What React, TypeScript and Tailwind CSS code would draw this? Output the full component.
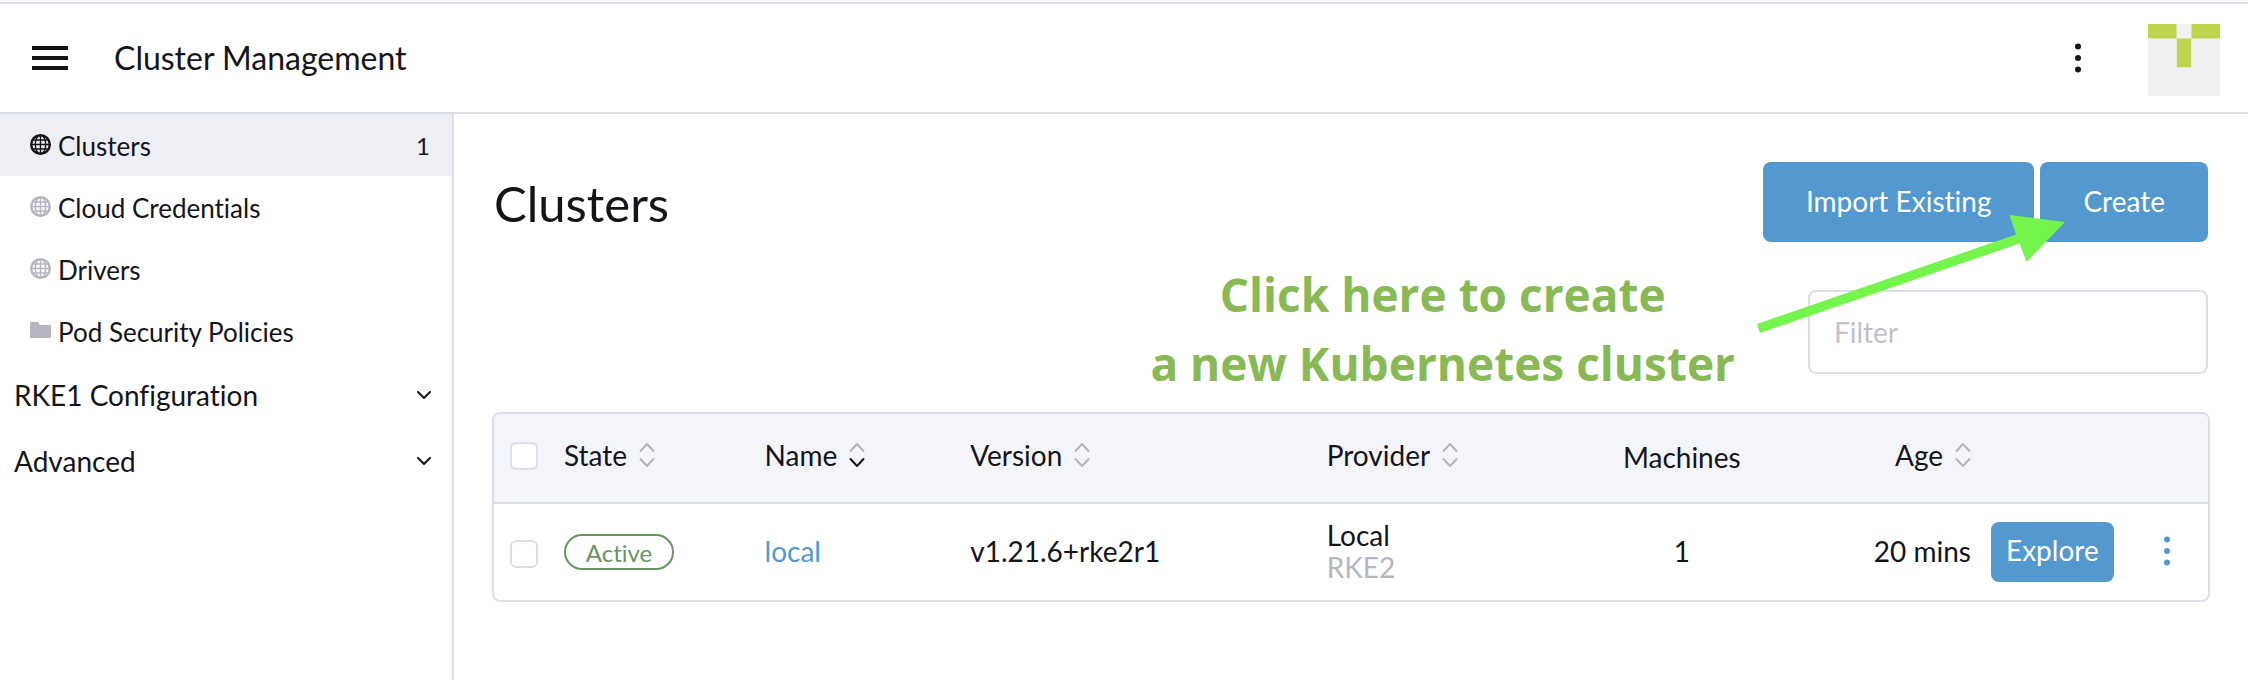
import { ReactNode } from "react";

function GlobeIcon() {
  return (
    <svg viewBox="0 0 21 21" className="h-[21px] w-[21px]" fill="none" stroke="currentColor" aria-hidden="true">
      <circle cx="10.5" cy="10.5" r="9.3" strokeWidth="2.4" />
      <ellipse cx="10.5" cy="10.5" rx="5.2" ry="9.4" strokeWidth="1.4" />
      <path d="M10.5 1v19M1.5 10.5h18M3 6h15M3 15h15" strokeWidth="1.4" />
    </svg>
  );
}

function FolderIcon() {
  return (
    <svg viewBox="0 0 21 21" className="h-[21px] w-[21px]" fill="currentColor" aria-hidden="true">
      <path d="M1 2h6.6a1 1 0 0 1 .9.6L9.600 5H20a1 1 0 0 1 1 1v11a1 1 0 0 1-1 1H1a1 1 0 0 1-1-1V3a1 1 0 0 1 1-1z" />
    </svg>
  );
}

function Chevron() {
  return (
    <svg viewBox="0 0 14 8" className="h-2 w-3.5" fill="none" stroke="currentColor" strokeWidth="2" strokeLinecap="round" strokeLinejoin="round" aria-hidden="true">
      <path d="M1 1l6 6 6-6" />
    </svg>
  );
}

function SortIcon({ active = false }: { active?: boolean }) {
  return (
    <svg viewBox="0 0 16 26" className="h-[26px] w-4" fill="none" strokeWidth="2" strokeLinecap="round" strokeLinejoin="round" aria-hidden="true">
      <path d="M1.500 9L8 2l6.500 7" stroke="#b4b5ba" />
      <path d="M1.500 17L8 24l6.500-7" stroke={active ? "#141419" : "#b4b5ba"} />
    </svg>
  );
}

function DotsIcon() {
  return (
    <svg viewBox="0 0 6 30" className="h-[30px] w-1.5" fill="currentColor" aria-hidden="true">
      <circle cx="3" cy="3.500" r="3" />
      <circle cx="3" cy="15" r="3" />
      <circle cx="3" cy="26.500" r="3" />
    </svg>
  );
}

function Avatar() {
  return (
    <svg viewBox="0 0 72 72" className="h-[72px] w-[72px]" role="img" aria-label="User avatar">
      <path fill="#f0f0f0" d="M0 0h72v72H0z" />
      <path fill="#bdd54c" d="M0 0h28.500v14.400H0zM43.500 0H72v14.400H43.500zM28.800 14.400h14.400v28.800H28.800z" />
    </svg>
  );
}

const navItems = [
  { label: "Clusters", count: 1, active: true },
  { label: "Cloud Credentials" },
  { label: "Drivers" },
  { label: "Pod Security Policies", folder: true },
];

const groups = ["RKE1 Configuration", "Advanced"];

function Checkbox({ label }: { label: string }) {
  return (
    <input
      type="checkbox"
      aria-label={label}
      className="block h-7 w-7 appearance-none rounded-md border-2 border-[#dcdee7] bg-white"
    />
  );
}

function SortHeader({ children, active, right }: { children: ReactNode; active?: boolean; right?: boolean }) {
  return (
    <th className="px-2.5 pb-1.5 font-normal">
      <button className={right ? "ml-auto flex items-center gap-3" : "flex items-center gap-3"}>
        {children}
        <SortIcon active={active} />
      </button>
    </th>
  );
}

export default function App() {
  return (
    <div className="flex min-h-screen flex-col bg-white pt-0.5 font-['Lato',sans-serif] text-[28px] leading-8 text-[#141419] [font-variant-ligatures:none]">
      <header className="flex h-28 shrink-0 items-center border-y-2 border-[#dcdee7] pr-7 pl-8">
        <button aria-label="Menu" className="flex w-9 flex-col gap-1.5">
          <span className="h-1 bg-current" />
          <span className="h-1 bg-current" />
          <span className="h-1 bg-current" />
        </button>
        <span className="ml-[46px] text-[32px] leading-10">Cluster Management</span>
        <button aria-label="More actions" className="ml-auto">
          <DotsIcon />
        </button>
        <div className="ml-[67px] pt-1">
          <Avatar />
        </div>
      </header>

      <div className="flex flex-1">
        <nav className="w-[454px] shrink-0 border-r-2 border-[#dcdee7]">
          <ul>
            {navItems.map((item) => (
              <li key={item.label}>
                <a
                  href="#"
                  className={
                    item.active
                      ? "flex h-[62px] items-center bg-[#eeeff4] pt-0.5 pr-[22px] pl-[30px] text-[26px]"
                      : "flex h-[62px] items-center pt-0.5 pr-[22px] pl-[30px] text-[26px]"
                  }
                >
                  <span className={item.active ? "mr-[7px] pb-1" : "mr-[7px] pb-1 text-[#b6b6c2]"}>
                    {item.folder ? <FolderIcon /> : <GlobeIcon />}
                  </span>
                  {item.label}
                  {item.count && <span className="ml-auto text-2xl">{item.count}</span>}
                </a>
              </li>
            ))}
          </ul>
          {groups.map((group) => (
            <button key={group} className="flex h-[66px] w-full items-center justify-between pr-[21px] pl-3.5">
              {group}
              <Chevron />
            </button>
          ))}
        </nav>

        <main className="relative min-w-0 flex-1 px-[38px] pt-12">
          <div className="flex items-center justify-between px-0.5">
            <h1 className="pt-0.5 text-[49px] leading-[56px]">Clusters</h1>
            <div className="flex gap-1.5">
              <button className="h-20 rounded-lg bg-[#5398cf] px-[43px] pb-0.5 text-white">Import Existing</button>
              <button className="h-20 rounded-lg bg-[#5398cf] px-[43px] pb-0.5 text-white">Create</button>
            </div>
          </div>

          <div className="mt-12 flex justify-end px-0.5">
            <input
              type="search"
              aria-label="Filter"
              placeholder="Filter"
              className="h-[84px] w-[400px] rounded-lg border-2 border-[#dcdee7] px-6 placeholder:text-[#bfc0d0]"
            />
          </div>

          <div className="mt-[38px] overflow-hidden rounded-lg border-2 border-[#dcdee7]">
            <table className="w-full table-fixed text-left">
              <colgroup>
                <col className="w-[60px]" />
                <col className="w-[11.7%]" />
                <col className="w-[12%]" />
                <col className="w-[20.8%]" />
                <col className="w-[15.4%]" />
                <col className="w-[11.8%]" />
                <col />
                <col className="w-[144px]" />
                <col className="w-[83px]" />
              </colgroup>
              <thead>
                <tr className="h-[89px] border-b-2 border-[#dcdee7] bg-[#f4f5fa]">
                  <th className="pb-1 pl-4">
                    <Checkbox label="Select all clusters" />
                  </th>
                  <SortHeader>State</SortHeader>
                  <SortHeader active>Name</SortHeader>
                  <SortHeader>Version</SortHeader>
                  <SortHeader>Provider</SortHeader>
                  <th className="pb-0.5 text-center font-normal">Machines</th>
                  <SortHeader right>Age</SortHeader>
                  <th aria-label="Explore" />
                  <th aria-label="Actions" />
                </tr>
              </thead>
              <tbody>
                <tr className="h-[97px]">
                  <td className="pt-1 pl-4">
                    <Checkbox label="Select local" />
                  </td>
                  <td className="px-2.5">
                    <span className="flex h-9 w-[110px] items-center justify-center rounded-full border-2 border-[#68945f] pt-0.5 text-2xl text-[#68945f]">
                      Active
                    </span>
                  </td>
                  <td className="px-2.5 pb-0.5">
                    <a href="#" className="text-[#5398cf]">local</a>
                  </td>
                  <td className="px-2.5 pb-0.5">v1.21.6+rke2r1</td>
                  <td className="px-2.5 pb-0.5">
                    <div>Local</div>
                    <div className="text-[#b6b6c2]">RKE2</div>
                  </td>
                  <td className="pb-0.5 text-center">1</td>
                  <td className="px-2.5 pb-0.5 text-right">20 mins</td>
                  <td className="px-2.5">
                    <button className="block h-[60px] rounded-lg bg-[#5398cf] px-[15px] pb-1 text-white">Explore</button>
                  </td>
                  <td className="pb-0.5">
                    <button aria-label="Row actions" className="mx-auto block text-[#5398cf]">
                      <DotsIcon />
                    </button>
                  </td>
                </tr>
              </tbody>
            </table>
          </div>

          <p className="absolute top-[146px] right-[513px] text-center font-['Comic_Sans_MS','Chalkboard','Open_Sans',sans-serif] text-[46px] leading-[69px] font-bold text-[#88b954]">
            Click here to create
            <br />a new Kubernetes cluster
          </p>
          <svg
            viewBox="0 0 308 118"
            className="pointer-events-none absolute top-[101px] right-[183px] h-[118px] w-[308px]"
            fill="#74f54b"
            aria-hidden="true"
          >
            <path d="M0 109L259 19.500 252.500 0 308 7 269.500 47 262.500 28.500 3 118z" />
          </svg>
        </main>
      </div>
    </div>
  );
}
